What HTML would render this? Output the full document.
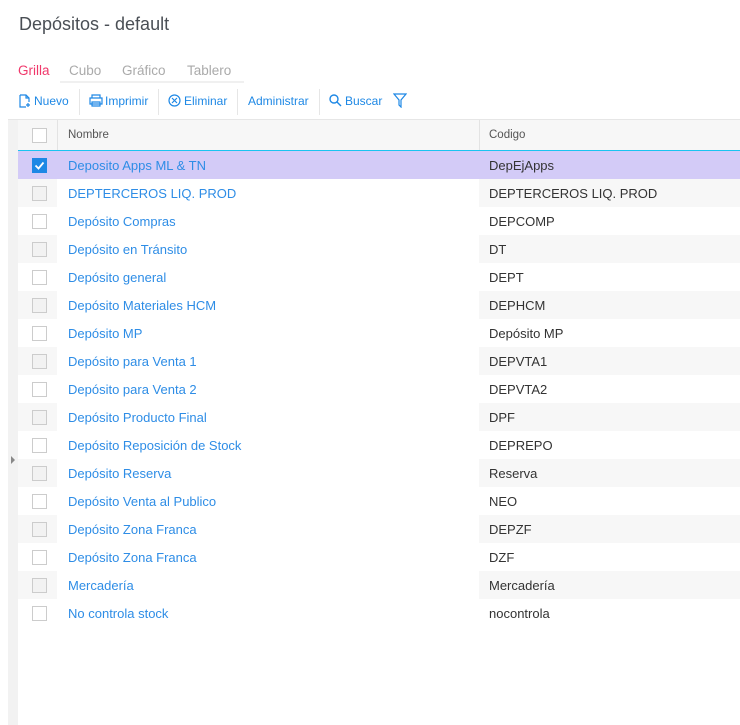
<!DOCTYPE html>
<html><head><meta charset="utf-8"><style>
*{margin:0;padding:0;box-sizing:border-box}
body{width:740px;height:725px;background:#fff;font-family:"Liberation Sans",sans-serif;position:relative;overflow:hidden}
.title{position:absolute;left:19px;top:14px;font-size:18px;color:#4a4f55}
.tabs{position:absolute;left:18px;top:63px;font-size:13.5px;color:#aaa}
.tabs span{position:absolute;top:0;white-space:nowrap}
.tabline{position:absolute;left:60px;top:81px;width:184px;height:2px;background:#f0f0f0}
.tb{position:absolute;top:94px;font-size:12px;color:#1e88e5;white-space:nowrap}
.sep{position:absolute;top:89px;width:1px;height:26px;background:#e6e6e6}
.hline{position:absolute;left:8px;top:119px;width:732px;height:1px;background:#e6e6e6}
.strip{position:absolute;left:8px;top:120px;width:10px;height:605px;background:#f2f2f2}
.hdr{position:absolute;left:18px;top:120px;width:722px;height:31px;background:#f7f7f7;border-bottom:1px solid #19c4f0}
.hdr .c1{position:absolute;left:39px;top:0;width:1px;height:30px;background:#e3e3e3}
.hdr .c2{position:absolute;left:461px;top:0;width:1px;height:30px;background:#e3e3e3}
.ht{position:absolute;top:129px;font-size:11.5px;color:#555}
.row{position:absolute;left:18px;width:722px;height:28px}
.row .a{position:absolute;left:0;top:0;width:39px;height:28px}
.row .b{position:absolute;left:461px;top:0;width:261px;height:28px}
.row.g .a,.row.g .b{background:#f7f7f7}
.row.sel{background:#d3cbf7}
.cb{position:absolute;left:14px;top:7px;width:15px;height:15px;border:1px solid #ccc;background:#fff}
.row.g .cb{background:#f2f2f2}
.row.sel .cb{background:#1e88e5;border-color:#1e88e5}
.n{position:absolute;left:50px;top:7px;font-size:13px;color:#2e8de6;white-space:nowrap}
.k{position:absolute;left:471px;top:7px;font-size:13px;color:#333;white-space:nowrap}
.arrow{position:absolute;left:11px;top:456px;width:0;height:0;border-top:4px solid transparent;border-bottom:4px solid transparent;border-left:4px solid #888}
</style></head><body>
<div class="title">Depósitos - default</div>
<div class="tabs"><span style="left:0;color:#f0386b">Grilla</span><span style="left:51px">Cubo</span><span style="left:104px">Gráfico</span><span style="left:169px">Tablero</span></div>
<div class="tabline"></div>
<svg style="position:absolute;left:19px;top:94px" width="13" height="14" viewBox="0 0 13 14" fill="none" stroke="#1e88e5" stroke-width="1.2"><path d="M1 1h6l3 3v4M1 1v12h6M7 1v3h3M9 9v4M7 11h4"/></svg>
<div class="tb" style="left:34px">Nuevo</div>
<div class="sep" style="left:79px"></div>
<svg style="position:absolute;left:89px;top:94px" width="14" height="13" viewBox="0 0 14 13" fill="none" stroke="#1e88e5" stroke-width="1.2"><path d="M3 4V1h8v3M1 4h12v6H1zM3 8h8v4H3z"/></svg>
<div class="tb" style="left:105px">Imprimir</div>
<div class="sep" style="left:158px"></div>
<svg style="position:absolute;left:168px;top:94px" width="13" height="13" viewBox="0 0 13 13" fill="none" stroke="#1e88e5" stroke-width="1.2"><circle cx="6.5" cy="6.5" r="5.5"/><path d="M4 4l5 5M9 4l-5 5"/></svg>
<div class="tb" style="left:184px">Eliminar</div>
<div class="sep" style="left:237px"></div>
<div class="tb" style="left:248px">Administrar</div>
<div class="sep" style="left:319px"></div>
<svg style="position:absolute;left:329px;top:94px" width="13" height="13" viewBox="0 0 13 13" fill="none" stroke="#1e88e5" stroke-width="1.4"><circle cx="5" cy="5" r="4"/><path d="M8 8l4 4"/></svg>
<div class="tb" style="left:345px">Buscar</div>
<svg style="position:absolute;left:393px;top:93px" width="14" height="15" viewBox="0 0 14 15" fill="none" stroke="#1e88e5" stroke-width="1.2"><path d="M1 1h12L8 7v7l-2-2V7z"/></svg>
<div class="hline"></div>
<div class="strip"></div>
<div class="arrow"></div>
<div class="hdr"><div class="c1"></div><div class="c2"></div><div class="cb" style="top:8px;background:#fff"></div></div>
<div class="ht" style="left:68px">Nombre</div>
<div class="ht" style="left:489px">Codigo</div>

<div class="row sel" style="top:151px"><div class="a"></div><div class="b"></div><div class="cb"><svg width="13" height="13" viewBox="0 0 13 13"><path d="M2.5 6.5l3 3 5-6" fill="none" stroke="#fff" stroke-width="1.8"/></svg></div><div class="n">Deposito Apps ML &amp; TN</div><div class="k">DepEjApps</div></div>
<div class="row g" style="top:179px"><div class="a"></div><div class="b"></div><div class="cb"></div><div class="n">DEPTERCEROS LIQ. PROD</div><div class="k">DEPTERCEROS LIQ. PROD</div></div>
<div class="row" style="top:207px"><div class="a"></div><div class="b"></div><div class="cb"></div><div class="n">Depósito Compras</div><div class="k">DEPCOMP</div></div>
<div class="row g" style="top:235px"><div class="a"></div><div class="b"></div><div class="cb"></div><div class="n">Depósito en Tránsito</div><div class="k">DT</div></div>
<div class="row" style="top:263px"><div class="a"></div><div class="b"></div><div class="cb"></div><div class="n">Depósito general</div><div class="k">DEPT</div></div>
<div class="row g" style="top:291px"><div class="a"></div><div class="b"></div><div class="cb"></div><div class="n">Depósito Materiales HCM</div><div class="k">DEPHCM</div></div>
<div class="row" style="top:319px"><div class="a"></div><div class="b"></div><div class="cb"></div><div class="n">Depósito MP</div><div class="k">Depósito MP</div></div>
<div class="row g" style="top:347px"><div class="a"></div><div class="b"></div><div class="cb"></div><div class="n">Depósito para Venta 1</div><div class="k">DEPVTA1</div></div>
<div class="row" style="top:375px"><div class="a"></div><div class="b"></div><div class="cb"></div><div class="n">Depósito para Venta 2</div><div class="k">DEPVTA2</div></div>
<div class="row g" style="top:403px"><div class="a"></div><div class="b"></div><div class="cb"></div><div class="n">Depósito Producto Final</div><div class="k">DPF</div></div>
<div class="row" style="top:431px"><div class="a"></div><div class="b"></div><div class="cb"></div><div class="n">Depósito Reposición de Stock</div><div class="k">DEPREPO</div></div>
<div class="row g" style="top:459px"><div class="a"></div><div class="b"></div><div class="cb"></div><div class="n">Depósito Reserva</div><div class="k">Reserva</div></div>
<div class="row" style="top:487px"><div class="a"></div><div class="b"></div><div class="cb"></div><div class="n">Depósito Venta al Publico</div><div class="k">NEO</div></div>
<div class="row g" style="top:515px"><div class="a"></div><div class="b"></div><div class="cb"></div><div class="n">Depósito Zona Franca</div><div class="k">DEPZF</div></div>
<div class="row" style="top:543px"><div class="a"></div><div class="b"></div><div class="cb"></div><div class="n">Depósito Zona Franca</div><div class="k">DZF</div></div>
<div class="row g" style="top:571px"><div class="a"></div><div class="b"></div><div class="cb"></div><div class="n">Mercadería</div><div class="k">Mercadería</div></div>
<div class="row" style="top:599px"><div class="a"></div><div class="b"></div><div class="cb"></div><div class="n">No controla stock</div><div class="k">nocontrola</div></div>
</body></html>
